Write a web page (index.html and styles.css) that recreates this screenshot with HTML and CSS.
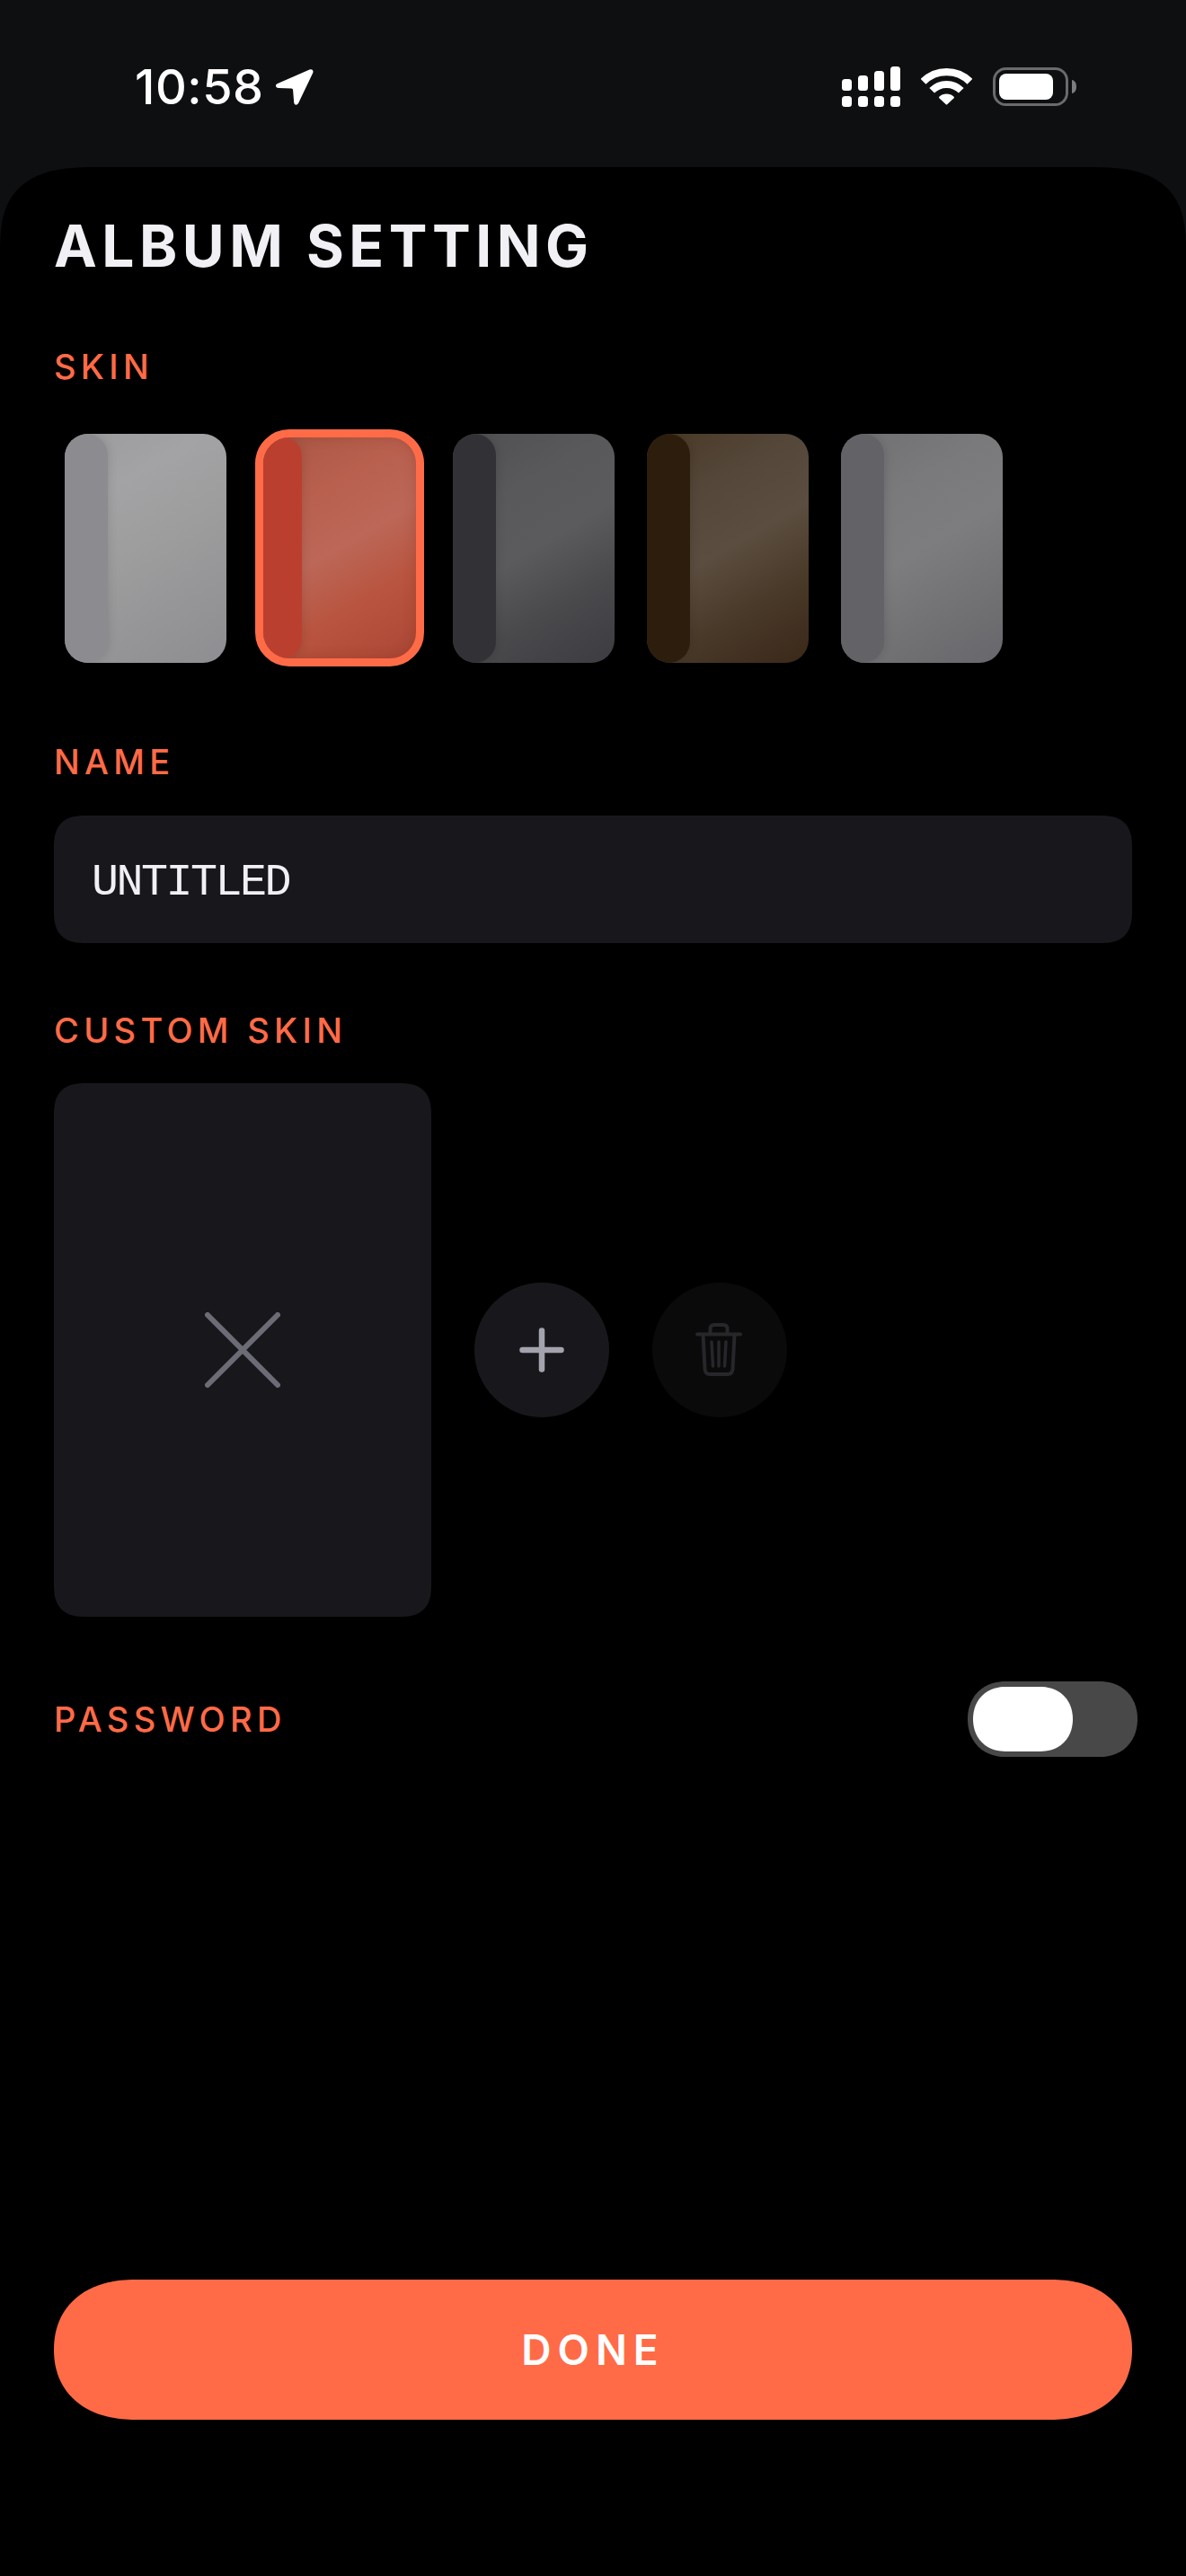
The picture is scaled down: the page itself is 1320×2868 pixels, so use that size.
FILE: index.html
```html
<!DOCTYPE html>
<html lang="en">
<head>
<meta charset="utf-8">
<title>Album Setting</title>
<link rel="stylesheet" href="styles.css">
</head>
<body>
<div class="screen">
  <header class="status">
    <div class="status-left">
      <span class="time">10:58</span>
      <svg class="arrow" width="42" height="40" viewBox="0 0 42 40"><path d="M37.500.6C40.500-.4 42.300 1.500 41.200 4.200L25.300 37.600C24 40.500 20.500 40.400 20.200 37.200L19.100 23.300C19 22.200 18.500 21.700 17.400 21.600L3.200 21C-.6 20.800-1 17.300 2 16Z" fill="#fff"/></svg>
    </div>
    <div class="status-right">
      <svg width="65" height="45" viewBox="0 0 65 45" fill="#fff">
        <rect x="0" y="14" width="11" height="13" rx="3.500"/><rect x="18" y="10" width="11" height="17" rx="3.500"/><rect x="36" y="5" width="11" height="22" rx="3.500"/><rect x="54" y="0" width="11" height="27" rx="3.500"/>
        <rect x="0" y="33" width="11" height="12" rx="3.500"/><rect x="18" y="33" width="11" height="12" rx="3.500"/><rect x="36" y="33" width="11" height="12" rx="3.500"/><rect x="54" y="33" width="11" height="12" rx="3.500"/>
      </svg>
      <svg width="57" height="41" viewBox="0 0 57 41" fill="none" stroke="#fff">
        <path d="M2.600 14.800A36.750 36.750 0 0 1 54.400 14.800" stroke-width="8.200"/>
        <path d="M12.200 24.700A23 23 0 0 1 44.800 24.700" stroke-width="8"/>
        <path d="M28.500 39.500L21 32.500A11 11 0 0 1 36 32.500Z" fill="#fff" stroke-width="2" stroke-linejoin="round"/>
      </svg>
      <svg width="93" height="43" viewBox="0 0 93 43">
        <rect x="1.500" y="1.500" width="81" height="40" rx="13" fill="none" stroke="#6b6b6d" stroke-width="3"/>
        <rect x="7" y="7" width="60" height="29" rx="8" fill="#fff"/>
        <path d="M88 14C91 14.500 93 17 93 21.500C93 26 91 28.500 88 29Z" fill="#7d7d7f"/>
      </svg>
    </div>
  </header>

  <main class="sheet">
    <h1 class="title">ALBUM SETTING</h1>

    <h2 class="label label-skin">SKIN</h2>
    <div class="skins">
      <div class="skin skin-silver"><div class="spine"></div></div>
      <div class="skin skin-red selected"><div class="spine"></div></div>
      <div class="skin skin-graphite"><div class="spine"></div></div>
      <div class="skin skin-brown"><div class="spine"></div></div>
      <div class="skin skin-gray"><div class="spine"></div></div>
    </div>

    <h2 class="label label-name">NAME</h2>
    <div class="field">UNTITLED</div>

    <h2 class="label label-custom">CUSTOM SKIN</h2>
    <div class="custom">
      <div class="custom-preview">
        <svg width="84" height="84" viewBox="0 0 84 84" fill="none" stroke="#6c6c76" stroke-width="6" stroke-linecap="round"><path d="M3 3L81 81M81 3L3 81"/></svg>
      </div>
      <div class="round-btn add">
        <svg width="50" height="50" viewBox="0 0 50 50" fill="none" stroke="#a3a3ad" stroke-width="6.500" stroke-linecap="round"><path d="M3.500 25H46.500M25 3.500V46.500"/></svg>
      </div>
      <div class="round-btn remove">
        <svg width="54" height="62" viewBox="0 0 54 62" fill="none" stroke="#27272b" stroke-linecap="round" stroke-linejoin="round">
          <path d="M2 13.500H50" stroke-width="4"/>
          <path d="M16.500 13V7.500C16.500 4.500 18 3 21 3H31C34 3 35.500 4.500 35.500 7.500V13" stroke-width="4"/>
          <path d="M8.500 14L10.500 52C10.700 56 12.500 58 16 58H36C39.500 58 41.300 56 41.500 52L43.500 14" stroke-width="4"/>
          <path d="M18 22L19.500 49M26 22V49M34 22L32.500 49" stroke-width="3.500"/>
        </svg>
      </div>
    </div>

    <div class="password-row">
      <h2 class="label">PASSWORD</h2>
      <div class="toggle"><div class="knob"></div></div>
    </div>

    <div class="done">DONE</div>
  </main>
</div>
</body>
</html>
```

FILE: styles.css
```css
* { box-sizing: border-box; }
html, body { margin: 0; padding: 0; background: #0e0f11; }
.screen {
  width: 1320px;
  height: 2868px;
  display: flex;
  flex-direction: column;
  font-family: Inter, "Liberation Sans", sans-serif;
}

/* status bar */
.status {
  height: 186px;
  flex: none;
  display: flex;
  justify-content: space-between;
  align-items: flex-start;
  padding: 73px 122px 0 150px;
}
.status-left { display: flex; align-items: center; height: 48px; gap: 13px; }
.time { font-size: 54px; line-height: 48px; font-weight: 500; color: #fff; letter-spacing: .5px; }
.status-right { display: flex; align-items: center; gap: 23px; height: 47px; }
.status-right svg, .arrow { display: block; }

/* sheet */
.sheet {
  flex: 1;
  background: #000;
  border-radius: 110px 110px 0 0 / 96px 96px 0 0;
  corner-shape: superellipse(1.5);
  display: flex;
  flex-direction: column;
  padding: 48px 60px 174px;
}
.title {
  margin: 0;
  font-size: 64px;
  line-height: 80px;
  font-weight: 700;
  letter-spacing: 5.500px;
  color: #f1f1f5;
}
.label {
  margin: 0;
  font-size: 38px;
  line-height: 44px;
  font-weight: 500;
  letter-spacing: 5.300px;
  color: #ff6b47;
}
.label-skin { margin-top: 72px; }
.label-name { margin-top: 88px; }
.label-custom { margin-top: 75px; }

/* skins */
.skins {
  display: flex;
  gap: 36px;
  margin-top: 53px;
  padding-left: 12px;
  height: 255px;
}
.skin {
  width: 180px;
  height: 255px;
  flex: none;
  border-radius: 26px;
  overflow: hidden;
  display: flex;
}
.spine {
  width: 48px;
  height: 100%;
  border-radius: 24px;
  box-shadow: 2px 0 10px rgba(0, 0, 0, .1);
}
.skin-silver { background: linear-gradient(150deg, #9b9b9d 0%, #a3a3a5 25%, #9d9d9e 50%, #969698 72%, #8e8e92 100%); }
.skin-silver .spine { background: #8c8c90; }
.skin-red { background: linear-gradient(150deg, #a95644 0%, #b9604f 28%, #bc6758 50%, #b8543f 72%, #ab4735 100%); box-shadow: inset 0 0 14px rgba(120, 40, 25, .25); }
.skin-red .spine { background: #bb3f2e; width: 43px; border-radius: 22px; }
.skin-graphite { background: linear-gradient(150deg, #4f4f51 0%, #59595b 28%, #5b5b5d 50%, #4a4a4d 72%, #3c3c41 100%); }
.skin-graphite .spine { background: #323236; }
.skin-brown { background: linear-gradient(150deg, #493726 0%, #55483a 28%, #5b4d3f 50%, #4a3a2a 72%, #3a2819 100%); }
.skin-brown .spine { background: #2d1d0c; }
.skin-gray { background: linear-gradient(150deg, #707072 0%, #7a7a7c 28%, #7d7d7f 50%, #737375 72%, #67676c 100%); }
.skin-gray .spine { background: #626267; }
.selected {
  width: 188px;
  height: 264px;
  margin: -5px -4px -4px;
  border: 9px solid #ff6b47;
  border-radius: 38px;
}

/* name */
.field {
  margin-top: 38px;
  height: 142px;
  flex: none;
  background: #18181c;
  border-radius: 36px;
  corner-shape: superellipse(1.4);
  display: flex;
  align-items: center;
  padding: 6px 0 0 42px;
  font-family: "Liberation Mono", "DejaVu Sans Mono", monospace;
  font-size: 50px;
  letter-spacing: -2.500px;
  color: #f1f1f5;
}

/* custom skin */
.custom {
  margin-top: 37px;
  display: flex;
  align-items: center;
  gap: 48px;
}
.custom-preview {
  width: 420px;
  height: 594px;
  background: #18181c;
  border-radius: 36px;
  corner-shape: superellipse(1.4);
  display: flex;
  align-items: center;
  justify-content: center;
}
.round-btn {
  width: 150px;
  height: 150px;
  border-radius: 50%;
  display: flex;
  align-items: center;
  justify-content: center;
}
.round-btn svg { display: block; }
.add { background: #18181c; }
.remove { background: #0a0a0b; }

/* password */
.password-row {
  margin-top: 72px;
  display: flex;
  align-items: center;
  justify-content: space-between;
}
.toggle {
  width: 189px;
  height: 84px;
  margin-right: -6px;
  padding: 6px;
  border-radius: 42px;
  corner-shape: superellipse(1.1);
  background: #484848;
}
.knob {
  width: 111px;
  height: 72px;
  border-radius: 36px;
  corner-shape: superellipse(1.1);
  background: #fff;
}

/* done */
.done {
  margin-top: auto;
  height: 156px;
  flex: none;
  border-radius: 90px / 78px;
  corner-shape: superellipse(1.15);
  background: #ff6b47;
  color: #fff;
  display: flex;
  align-items: center;
  justify-content: center;
  font-size: 46px;
  font-weight: 600;
  letter-spacing: 7px;
}
```
